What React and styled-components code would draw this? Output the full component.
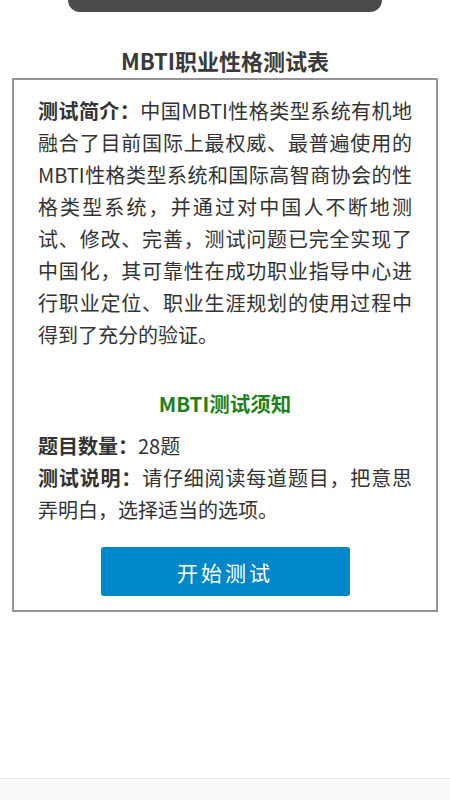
import React from "react";
import styled, { createGlobalStyle } from "styled-components";

const GlobalStyle = createGlobalStyle`
  html, body {
    margin: 0;
    padding: 0;
    background: #ffffff;
  }
  body {
    font-family: "Noto Sans CJK SC", "Noto Sans", sans-serif;
    color: #333;
  }
`;

const App = () => {
  return (
    <Page>
      <GlobalStyle />
      <PlayerBar />
      <Title>MBTI职业性格测试表</Title>
      <Card>
        <Paragraph>
          <Label>测试简介：</Label>
          中国MBTI性格类型系统有机地融合了目前国际上最权威、最普遍使用的MBTI性格类型系统和国际高智商协会的性格类型系统，并通过对中国人不断地测试、修改、完善，测试问题已完全实现了中国化，其可靠性在成功职业指导中心进行职业定位、职业生涯规划的使用过程中得到了充分的验证。
        </Paragraph>
        <SubTitle>MBTI测试须知</SubTitle>
        <Paragraph>
          <Label>题目数量：</Label>28题
        </Paragraph>
        <Paragraph>
          <Label>测试说明：</Label>
          请仔细阅读每道题目，把意思弄明白，选择适当的选项。
        </Paragraph>
        <StartButton type="button">开始测试</StartButton>
      </Card>
      <Spacer />
      <BottomBar />
    </Page>
  );
};

export default App;

const Page = styled.div`
  min-height: 100vh;
  display: flex;
  flex-direction: column;
`;
const PlayerBar = styled.div`
  width: 314px;
  height: 12px;
  margin: 0 auto;
  background: #4a4a4a;
  border-radius: 0 0 18px 18px;
`;
const Title = styled.h1`
  margin: 33px 0 3px;
  text-align: center;
  font-size: 22px;
  line-height: 30px;
  font-weight: 700;
  color: #3a3a3a;
`;
const Card = styled.div`
  margin: 0 12px;
  border: 2px solid #959595;
  padding: 15px 24px 14px;
  display: flex;
  flex-direction: column;
`;
const Paragraph = styled.p`
  margin: 0;
  font-size: 20px;
  line-height: 32px;
  text-align: justify;
  color: #333;
`;
const Label = styled.span`
  font-weight: 700;
`;
const SubTitle = styled.h2`
  margin: 36px 0 11px;
  text-align: center;
  font-size: 20.5px;
  line-height: 32px;
  font-weight: 700;
  color: #1f7f1a;
`;
const StartButton = styled.button`
  align-self: center;
  margin-top: 21px;
  width: 249px;
  height: 49px;
  border: none;
  border-radius: 3px;
  background: #0087c9;
  color: #fff;
  font-family: "Noto Sans CJK SC", "Noto Sans", sans-serif;
  font-size: 21px;
  letter-spacing: 3px;
  cursor: pointer;
`;
const Spacer = styled.div`
  flex: 1;
`;
const BottomBar = styled.div`
  height: 21px;
  border-top: 1px solid #e6e6e6;
  background: #fafafa;
`;
